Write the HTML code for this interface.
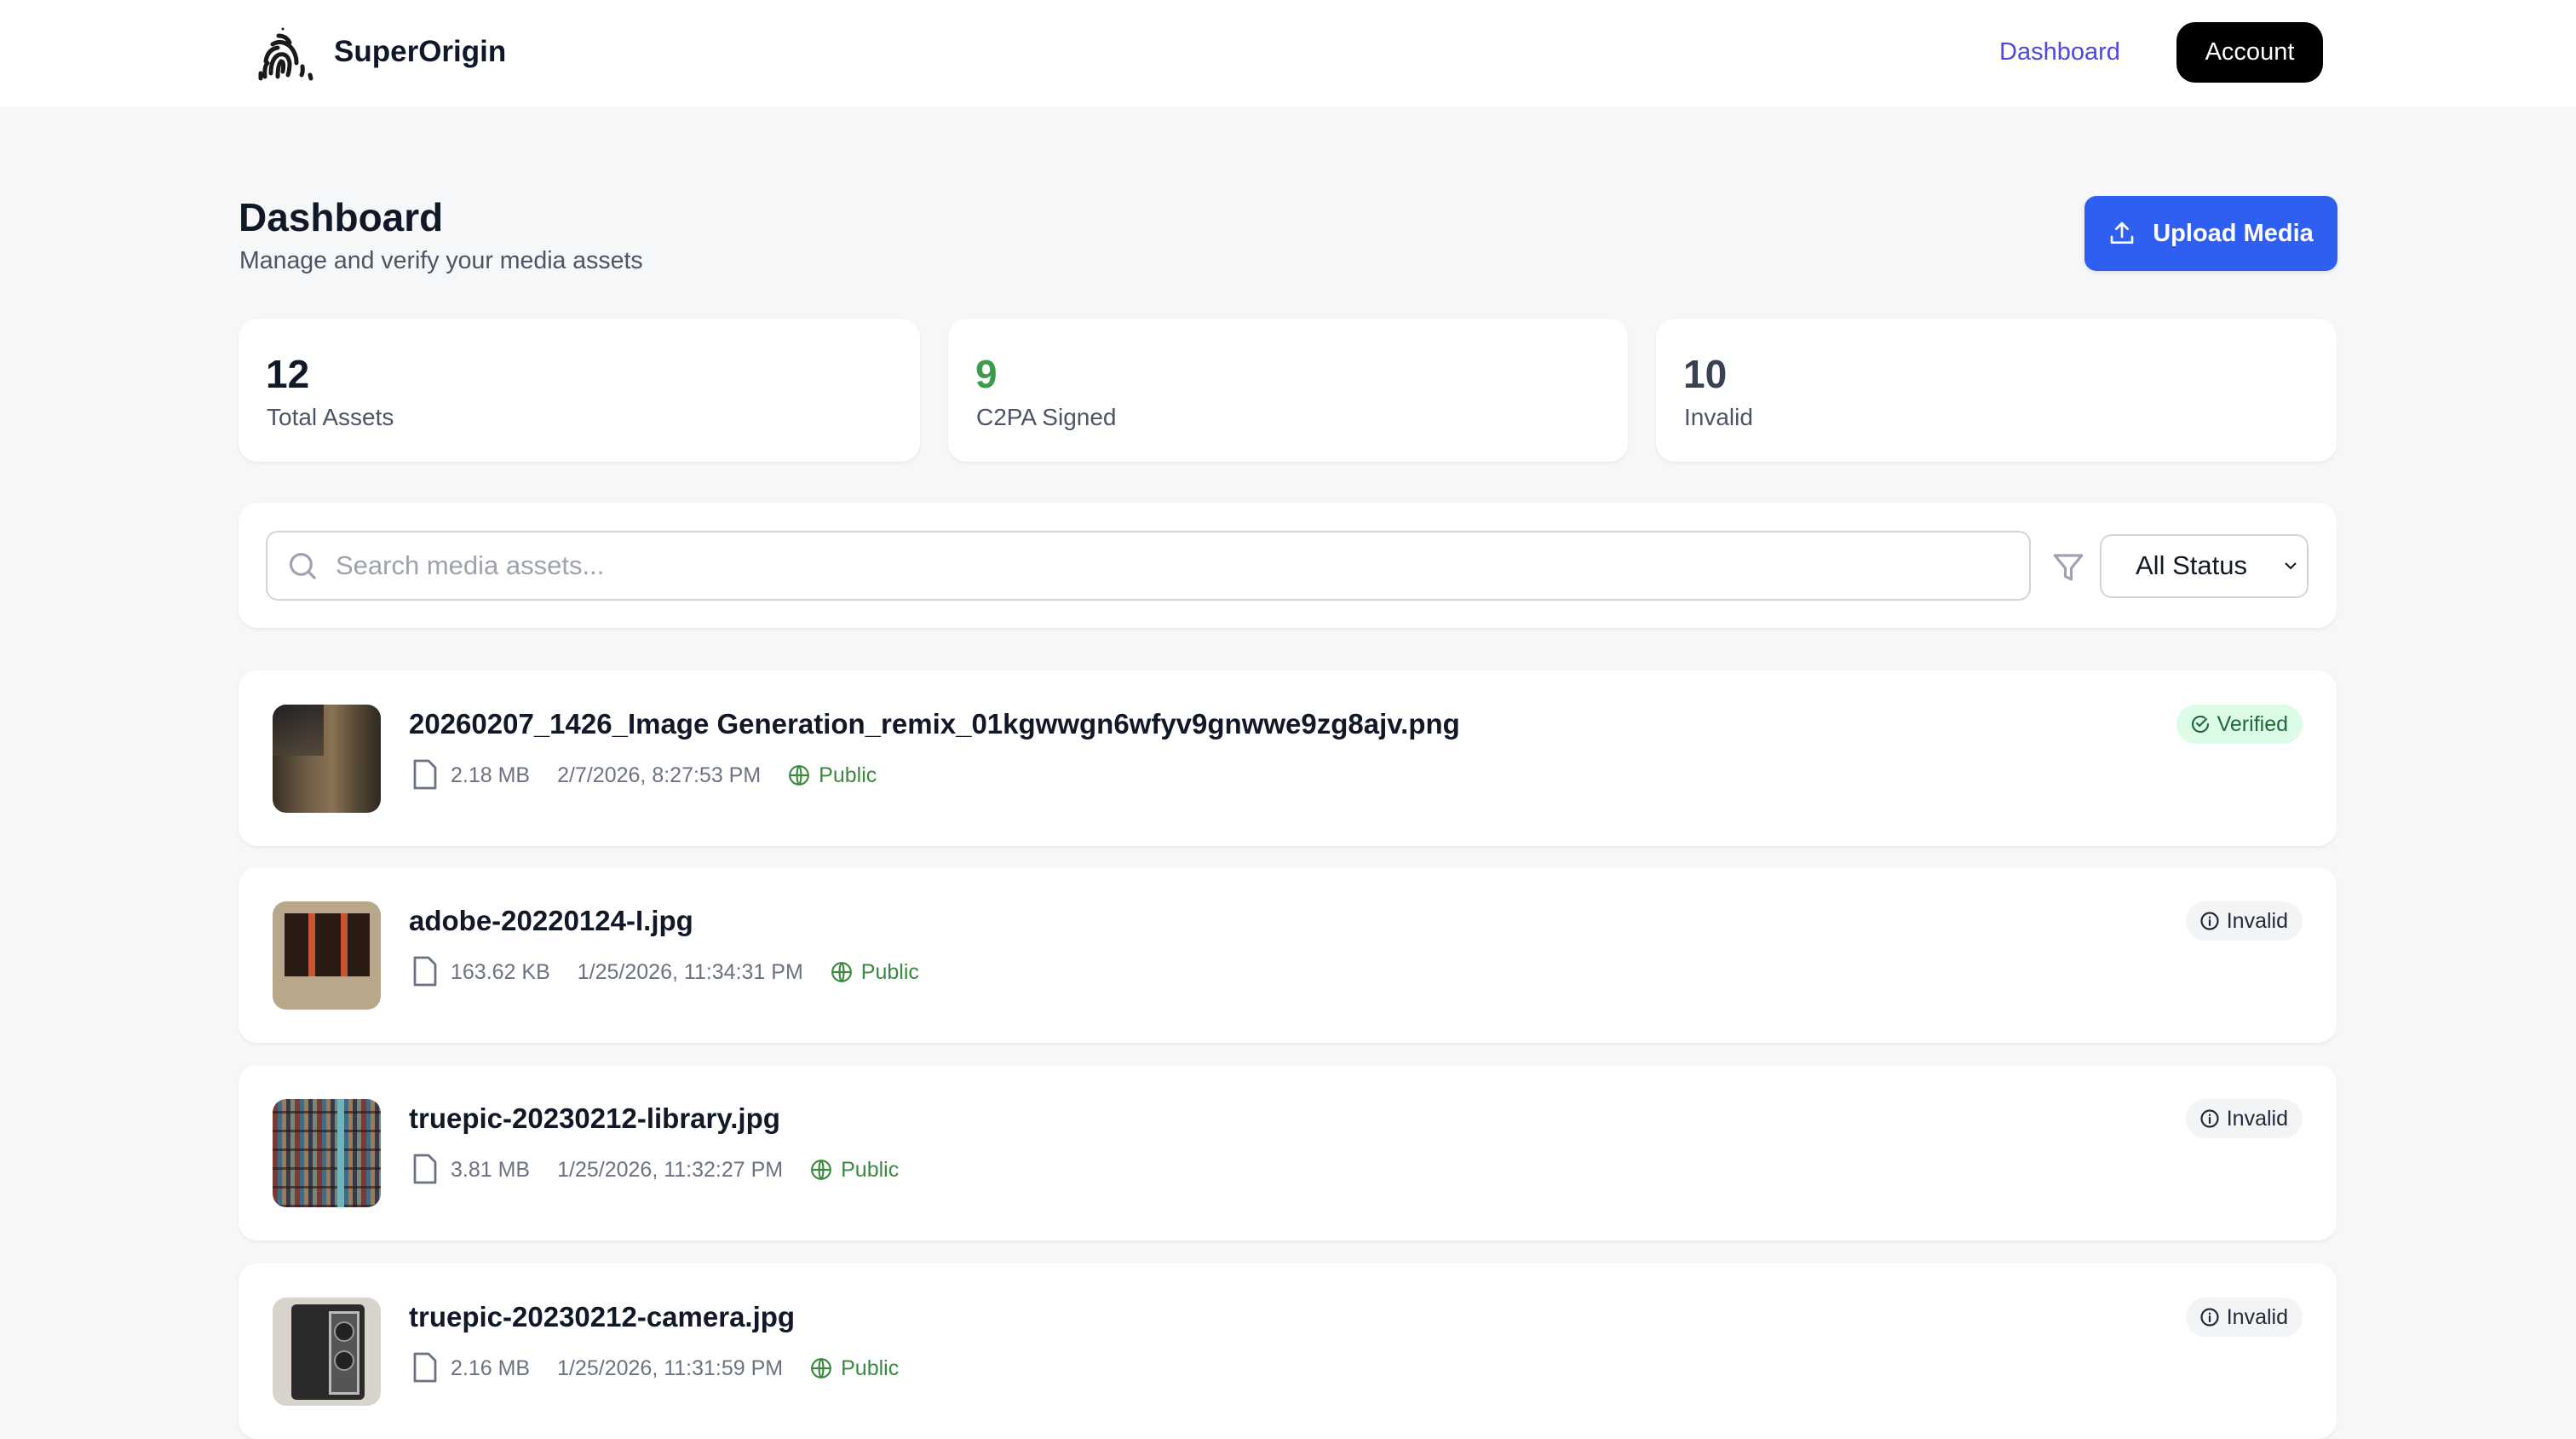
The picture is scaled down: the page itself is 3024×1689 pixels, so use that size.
<!DOCTYPE html>
<html><head><meta charset="utf-8"><style>
*{box-sizing:border-box;margin:0;padding:0}
body{width:3024px;height:1652px;overflow:hidden;background:#f6f7f9;font-family:"Liberation Sans",sans-serif;color:#111827;position:relative}
.abs{position:absolute}
.hdr{left:0;top:0;width:3024px;height:125px;background:#fff}
.card{background:#fff;border-radius:22px;box-shadow:0 2px 4px rgba(0,0,0,.06)}
.num{font-size:46px;font-weight:bold;left:32px;top:38px}
.lbl{font-size:28px;color:#4b5563;left:33px;top:100px}
.fname{font-size:33px;font-weight:bold;color:#111827;left:200px;top:44px}
.meta{left:203px;top:104px;font-size:25px;color:#6b7280;display:flex;align-items:center;white-space:nowrap}
.thumb{left:40px;top:40px;width:127px;height:127px;border-radius:16px;overflow:hidden}
.badge{height:46px;border-radius:23px;font-size:25px;display:flex;align-items:center;padding:0 17px 0 16px;top:40px;right:40px}
</style></head><body>
<div class="abs hdr"></div>
<svg class="abs" style="left:300px;top:28px" width="72" height="68" viewBox="0 0 72 68" fill="none" stroke="#1a1a1a" stroke-width="5" stroke-linecap="round">
<circle cx="32" cy="6" r="1.5" fill="#1a1a1a" stroke="none"/>
<path d="M27 14 Q36 14 40 22"/>
<path d="M20 24 Q30 18 40 26 Q48 34 48 46"/>
<path d="M12 44 Q14 30 26 28"/>
<path d="M18 58 Q18 40 28 36 Q38 34 40 46 Q40 54 38 60"/>
<path d="M26 62 Q26 48 30 44 Q34 44 32 56"/>
<path d="M6 58 L6 64"/>
<path d="M11 62 Q10 50 14 46"/>
<path d="M55 50 Q56 56 54 60"/>
<path d="M64 60 L65 64"/>
</svg>
<div class="abs" style="left:392px;top:41px;font-size:35px;font-weight:bold;color:#0f172a">SuperOrigin</div>
<div class="abs" style="left:2347px;top:45px;font-size:29px;color:#4f46e5">Dashboard</div>
<div class="abs" style="left:2555px;top:26px;width:172px;height:71px;background:#000;border-radius:22px;color:#fff;font-size:29px;display:flex;align-items:center;justify-content:center">Account</div>

<div class="abs" style="left:280px;top:228px;font-size:46px;font-weight:bold;color:#111827">Dashboard</div>
<div class="abs" style="left:281px;top:290px;font-size:28.5px;color:#4b5563">Manage and verify your media assets</div>
<div class="abs" style="left:2447px;top:230px;width:297px;height:88px;background:#2f5ff1;border-radius:14px;color:#fff;font-size:29px;font-weight:bold;display:flex;align-items:center;justify-content:center;box-shadow:0 2px 4px rgba(0,0,0,.1)">
<svg width="32" height="32" viewBox="0 0 24 24" fill="none" stroke="#fff" stroke-width="2" stroke-linecap="round" stroke-linejoin="round" style="margin-right:20px"><path d="M12 15V3M7 8l5-5 5 5M3 15v5h18v-5"/></svg>Upload Media</div>

<div class="abs card" style="left:280px;top:374px;width:800px;height:168px"><div class="abs num">12</div><div class="abs lbl">Total Assets</div></div>
<div class="abs card" style="left:1113px;top:374px;width:798px;height:168px"><div class="abs num" style="color:#3f9b4c">9</div><div class="abs lbl">C2PA Signed</div></div>
<div class="abs card" style="left:1944px;top:374px;width:799px;height:168px"><div class="abs num" style="color:#374151">10</div><div class="abs lbl">Invalid</div></div>

<div class="abs card" style="left:280px;top:590px;width:2463px;height:147px">
 <div class="abs" style="left:32px;top:33px;width:2072px;height:82px;border:2px solid #d1d5db;border-radius:14px"></div>
 <svg class="abs" style="left:56px;top:55px" width="38" height="38" viewBox="0 0 24 24" fill="none" stroke="#9ca3af" stroke-width="2" stroke-linecap="round"><circle cx="11" cy="11" r="7.5"/><path d="M16.5 16.5L21 21"/></svg>
 <div class="abs" style="left:114px;top:56px;font-size:31px;color:#9ca3af">Search media assets...</div>
 <svg class="abs" style="left:2127px;top:55px" width="42" height="42" viewBox="0 0 24 24" fill="none" stroke="#9ca3af" stroke-width="1.8" stroke-linejoin="round"><path d="M3 4h18l-7 8.5V20l-4-2v-5.5z"/></svg>
 <div class="abs" style="left:2185px;top:37px;width:245px;height:75px;border:2px solid #d1d5db;border-radius:14px"></div>
 <div class="abs" style="left:2227px;top:56px;font-size:31px;color:#111827">All Status</div>
 <svg class="abs" style="left:2400px;top:68px" width="18" height="12" viewBox="0 0 18 12" fill="none" stroke="#111" stroke-width="2"><path d="M3 3l6 6 6-6"/></svg>
</div>

<div class="abs card" style="left:280px;top:787px;width:2463px;height:206px">
 <div class="abs thumb" style="background:linear-gradient(90deg,#3a3026 0%,#6b5a44 30%,#8a7254 55%,#5b4c36 75%,#2d2a22 100%)"><div style="position:absolute;left:0;top:0;width:60px;height:60px;background:linear-gradient(#1d1d24,#4a4034);opacity:.8"></div></div>
 <div class="abs fname">20260207_1426_Image Generation_remix_01kgwwgn6wfyv9gnwwe9zg8ajv.png</div>
 <div class="abs meta"><svg width="32" height="38" viewBox="0 0 16 19" fill="none" stroke="#6b7280" stroke-width="1.4" stroke-linejoin="round"><path d="M2 1h8l4 4v12H2z"/></svg><span style="margin-left:14px">2.18 MB</span><span style="margin-left:32px">2/7/2026, 8:27:53 PM</span><span style="margin-left:32px;color:#3a8a3e;display:flex;align-items:center"><svg width="26" height="26" viewBox="0 0 24 24" fill="none" stroke="#3a8a3e" stroke-width="2"><circle cx="12" cy="12" r="10"/><path d="M2 12h20M12 2c3 3 3 17 0 20M12 2c-3 3-3 17 0 20"/></svg><span style="margin-left:10px">Public</span></span></div>
 <div class="abs badge" style="background:#dcfce7;color:#1f6a3a"><svg width="24" height="24" viewBox="0 0 24 24" fill="none" stroke="#1f6a3a" stroke-width="2.2" stroke-linecap="round"><path d="M21 12a9 9 0 1 1-4-7.5"/><path d="M8 11l3 3 8-8"/></svg><span style="margin-left:8px">Verified</span></div>
</div>

<div class="abs card" style="left:280px;top:1018px;width:2463px;height:206px">
 <div class="abs thumb" style="background:#b9a78c"><div style="position:absolute;left:14px;top:14px;width:100px;height:74px;background:#2a1a14"></div><div style="position:absolute;left:42px;top:14px;width:8px;height:74px;background:#c8552f"></div><div style="position:absolute;left:80px;top:14px;width:8px;height:74px;background:#c8552f"></div></div>
 <div class="abs fname">adobe-20220124-I.jpg</div>
 <div class="abs meta"><svg width="32" height="38" viewBox="0 0 16 19" fill="none" stroke="#6b7280" stroke-width="1.4" stroke-linejoin="round"><path d="M2 1h8l4 4v12H2z"/></svg><span style="margin-left:14px">163.62 KB</span><span style="margin-left:32px">1/25/2026, 11:34:31 PM</span><span style="margin-left:32px;color:#3a8a3e;display:flex;align-items:center"><svg width="26" height="26" viewBox="0 0 24 24" fill="none" stroke="#3a8a3e" stroke-width="2"><circle cx="12" cy="12" r="10"/><path d="M2 12h20M12 2c3 3 3 17 0 20M12 2c-3 3-3 17 0 20"/></svg><span style="margin-left:10px">Public</span></span></div>
 <div class="abs badge" style="background:#f3f4f6;color:#1f2937"><svg width="24" height="24" viewBox="0 0 24 24" fill="none" stroke="#1f2937" stroke-width="2.2" stroke-linecap="round"><circle cx="12" cy="12" r="9.5"/><path d="M12 11v6M12 7.5v.5"/></svg><span style="margin-left:8px">Invalid</span></div>
</div>

<div class="abs card" style="left:280px;top:1250px;width:2463px;height:206px">
 <div class="abs thumb" style="background:repeating-linear-gradient(90deg,#7a3b34 0 6px,#3f6b86 6px 11px,#9c7b56 11px 16px,#3a3a48 16px 21px,#6d8a7a 21px 26px)"><div style="position:absolute;inset:0;background:repeating-linear-gradient(0deg,rgba(40,20,15,.6) 0 3px,transparent 3px 22px)"></div><div style="position:absolute;left:76px;top:0;width:8px;height:127px;background:#6fb5b8"></div></div>
 <div class="abs fname">truepic-20230212-library.jpg</div>
 <div class="abs meta"><svg width="32" height="38" viewBox="0 0 16 19" fill="none" stroke="#6b7280" stroke-width="1.4" stroke-linejoin="round"><path d="M2 1h8l4 4v12H2z"/></svg><span style="margin-left:14px">3.81 MB</span><span style="margin-left:32px">1/25/2026, 11:32:27 PM</span><span style="margin-left:32px;color:#3a8a3e;display:flex;align-items:center"><svg width="26" height="26" viewBox="0 0 24 24" fill="none" stroke="#3a8a3e" stroke-width="2"><circle cx="12" cy="12" r="10"/><path d="M2 12h20M12 2c3 3 3 17 0 20M12 2c-3 3-3 17 0 20"/></svg><span style="margin-left:10px">Public</span></span></div>
 <div class="abs badge" style="background:#f3f4f6;color:#1f2937"><svg width="24" height="24" viewBox="0 0 24 24" fill="none" stroke="#1f2937" stroke-width="2.2" stroke-linecap="round"><circle cx="12" cy="12" r="9.5"/><path d="M12 11v6M12 7.5v.5"/></svg><span style="margin-left:8px">Invalid</span></div>
</div>

<div class="abs card" style="left:280px;top:1483px;width:2463px;height:206px">
 <div class="abs thumb" style="background:#d8d4cc"><div style="position:absolute;left:22px;top:8px;width:86px;height:112px;background:#2b2b2b;border-radius:6px"></div><div style="position:absolute;left:66px;top:16px;width:36px;height:98px;background:#555;border:3px solid #bbb"></div><div style="position:absolute;left:72px;top:28px;width:24px;height:24px;border-radius:50%;background:#222;border:2px solid #999"></div><div style="position:absolute;left:72px;top:62px;width:24px;height:24px;border-radius:50%;background:#222;border:2px solid #999"></div></div>
 <div class="abs fname">truepic-20230212-camera.jpg</div>
 <div class="abs meta"><svg width="32" height="38" viewBox="0 0 16 19" fill="none" stroke="#6b7280" stroke-width="1.4" stroke-linejoin="round"><path d="M2 1h8l4 4v12H2z"/></svg><span style="margin-left:14px">2.16 MB</span><span style="margin-left:32px">1/25/2026, 11:31:59 PM</span><span style="margin-left:32px;color:#3a8a3e;display:flex;align-items:center"><svg width="26" height="26" viewBox="0 0 24 24" fill="none" stroke="#3a8a3e" stroke-width="2"><circle cx="12" cy="12" r="10"/><path d="M2 12h20M12 2c3 3 3 17 0 20M12 2c-3 3-3 17 0 20"/></svg><span style="margin-left:10px">Public</span></span></div>
 <div class="abs badge" style="background:#f3f4f6;color:#1f2937"><svg width="24" height="24" viewBox="0 0 24 24" fill="none" stroke="#1f2937" stroke-width="2.2" stroke-linecap="round"><circle cx="12" cy="12" r="9.5"/><path d="M12 11v6M12 7.5v.5"/></svg><span style="margin-left:8px">Invalid</span></div>
</div>
</body></html>
